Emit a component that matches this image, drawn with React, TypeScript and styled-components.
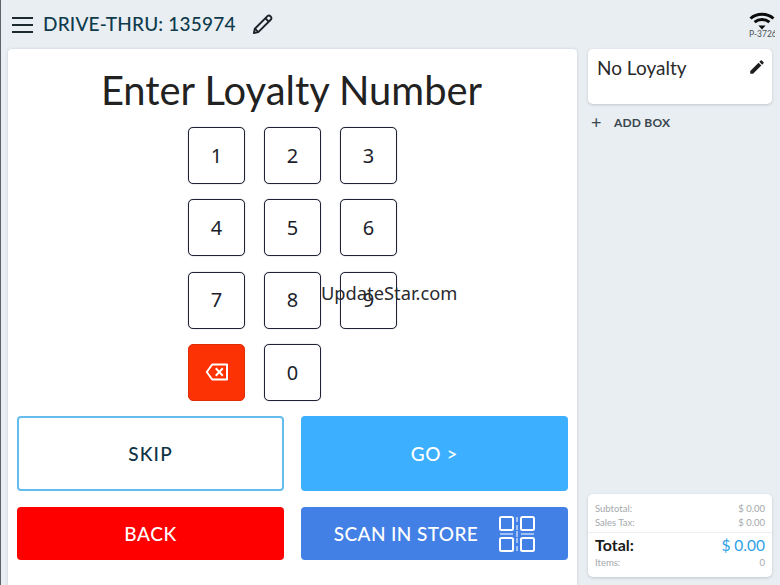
import React from "react";
import styled, { createGlobalStyle } from "styled-components";

const GlobalStyle = createGlobalStyle`
  html, body { margin: 0; padding: 0; }
  body { background: #e9eef2; font-family: Lato, "Liberation Sans", sans-serif; overflow: hidden; }
`;

const KEYS = ["1", "2", "3", "4", "5", "6", "7", "8", "9", "del", "0"];

export default function App() {
  return (
    <>
      <GlobalStyle />
      <Page>
        <Header>
          <MenuButton>
            <span />
            <span />
            <span />
          </MenuButton>
          <HeaderTitle>DRIVE-THRU: 135974</HeaderTitle>
          <HeaderPencil viewBox="0 0 24 24">
            <path d="M17.2 3.2a2.6 2.6 0 0 1 3.6 3.6L7.6 20 3 21l1-4.6z" />
            <path d="M15 5.5l3.5 3.5" />
            <path d="M4.3 16.6l3.1 3.1" />
          </HeaderPencil>
          <DeviceStatus>
            <svg width="26" height="18" viewBox="0 0 26 18">
              <path d="M1.5 6.5C7.8.9 18.2.9 24.5 6.5" />
              <path d="M5.6 10.2c4.2-3.5 10.6-3.5 14.8 0" />
              <polygon points="9.4,13.4 16.6,13.4 13,17.4" />
            </svg>
            <DeviceName>P-3726</DeviceName>
          </DeviceStatus>
        </Header>
        <Body>
          <MainPanel>
            <Title>Enter Loyalty Number</Title>
            <Keypad>
              {KEYS.map((k) =>
                k === "del" ? (
                  <DeleteKey key={k}>
                    <svg width="24" height="18" viewBox="0 0 24 18">
                      <path d="M7.2 1.5H22v15H7.2L1.8 9z" />
                      <path d="M10.8 5.2l7 7.6M17.8 5.2l-7 7.6" />
                    </svg>
                  </DeleteKey>
                ) : (
                  <Key key={k}>{k}</Key>
                )
              )}
            </Keypad>
            <Actions>
              <SkipButton>SKIP</SkipButton>
              <GoButton>GO &gt;</GoButton>
              <BackButton>BACK</BackButton>
              <ScanButton>
                SCAN IN STORE
                <QrIcon viewBox="0 0 36 36">
                  <rect x="1" y="1" width="13" height="13" rx="1.5" />
                  <rect x="22" y="1" width="13" height="13" rx="1.5" />
                  <rect x="1" y="22" width="13" height="13" rx="1.5" />
                  <rect x="22" y="22" width="13" height="13" rx="1.5" />
                  <ThinLines d="M18 1v5M18 9v5M18 22v5M18 30v5M1 18h13M22 18h13M18 15v6" />
                </QrIcon>
              </ScanButton>
            </Actions>
          </MainPanel>
          <Sidebar>
            <LoyaltyCard>
              <LoyaltyName>No Loyalty</LoyaltyName>
              <svg width="18" height="18" viewBox="0 0 24 24" fill="#1f1f1f">
                <path d="M3 17.25V21h3.75L17.81 9.94l-3.75-3.75L3 17.25zM20.71 7.04a1 1 0 0 0 0-1.41l-2.34-2.34a1 1 0 0 0-1.41 0l-1.83 1.83 3.75 3.75 1.83-1.83z" />
              </svg>
            </LoyaltyCard>
            <AddBox>
              <PlusSign>+</PlusSign>
              ADD BOX
            </AddBox>
            <Totals>
              <MinorRow>
                <span>Subtotal:</span>
                <span>$ 0.00</span>
              </MinorRow>
              <MinorRow>
                <span>Sales Tax:</span>
                <span>$ 0.00</span>
              </MinorRow>
              <TotalRow>
                <span>Total:</span>
                <TotalAmount>$ 0.00</TotalAmount>
              </TotalRow>
              <ItemsRow>
                <span>Items:</span>
                <span>0</span>
              </ItemsRow>
            </Totals>
          </Sidebar>
        </Body>
        <Watermark>UpdateStar.com</Watermark>
      </Page>
    </>
  );
}

const Page = styled.div`
  position: relative;
  width: 780px;
  height: 585px;
  display: flex;
  flex-direction: column;
  overflow: hidden;
  border-left: 1px solid #5b6468;
  box-sizing: border-box;
`;

const Header = styled.header`
  height: 49px;
  display: flex;
  align-items: center;
  padding-left: 11px;
  flex-shrink: 0;
`;

const MenuButton = styled.div`
  width: 21px;
  display: flex;
  flex-direction: column;
  gap: 5px;
  margin-right: 10px;
  span {
    display: block;
    height: 2px;
    background: #1c2a30;
  }
`;

const HeaderTitle = styled.div`
  font-size: 19px;
  font-weight: 500;
  color: #0f3b4c;
  letter-spacing: 0.2px;
  margin-bottom: 2px;
`;

const HeaderPencil = styled.svg`
  width: 23px;
  height: 23px;
  margin-left: 15px;
  fill: none;
  stroke: #1c2328;
  stroke-width: 2;
  stroke-linejoin: round;
`;

const DeviceStatus = styled.div`
  margin-left: auto;
  margin-right: 5px;
  width: 26px;
  display: flex;
  flex-direction: column;
  align-items: flex-start;
  overflow: hidden;
  margin-top: 1px;
  svg path {
    fill: none;
    stroke: #0c0c0c;
    stroke-width: 3;
  }
  svg polygon {
    fill: #0c0c0c;
  }
`;

const DeviceName = styled.div`
  font-size: 8.5px;
  line-height: 9px;
  color: #4a5358;
  white-space: nowrap;
`;

const Body = styled.div`
  flex: 1;
  display: flex;
  padding-left: 7px;
  gap: 11px;
  min-height: 0;
`;

const MainPanel = styled.main`
  width: 569px;
  background: #fff;
  border-radius: 4px 4px 0 0;
  box-shadow: 0 0 3px rgba(90, 110, 125, 0.25);
  display: flex;
  flex-direction: column;
  align-items: center;
  box-sizing: border-box;
  padding: 0 9px;
`;

const Title = styled.h1`
  margin: 15px 2px 0 0;
  font-size: 39.9px;
  line-height: 52px;
  font-weight: 400;
  color: #222;
`;

const Keypad = styled.div`
  display: grid;
  grid-template-columns: repeat(3, 57px);
  grid-auto-rows: 57px;
  column-gap: 19px;
  row-gap: 15.4px;
  margin-top: 11px;
`;

const Key = styled.div`
  box-sizing: border-box;
  border: 1.5px solid #1f2236;
  border-radius: 5px;
  box-shadow: 0 0 1px rgba(35, 38, 58, 0.6);
  display: flex;
  align-items: center;
  justify-content: center;
  padding-bottom: 1px;
  font-family: "Noto Sans", sans-serif;
  font-size: 20px;
  color: #1c1e2c;
  background: #fff;
`;

const DeleteKey = styled(Key)`
  background: #fc3205;
  border-color: #e02c05;
  box-shadow: none;
  svg path {
    fill: none;
    stroke: #fff;
    stroke-width: 2;
    stroke-linejoin: round;
  }
`;

const Actions = styled.div`
  align-self: stretch;
  display: grid;
  grid-template-columns: 267px 267px;
  grid-template-rows: 75px 53px;
  column-gap: 17px;
  row-gap: 16px;
  margin-top: 15px;
`;

const ActionButton = styled.div`
  box-sizing: border-box;
  border-radius: 4px;
  display: flex;
  align-items: center;
  justify-content: center;
  font-size: 19px;
  font-weight: 500;
  letter-spacing: 0.6px;
  color: #fff;
`;

const SkipButton = styled(ActionButton)`
  background: #fff;
  border: 2px solid #64bdee;
  color: #0f3346;
  letter-spacing: 1.2px;
`;

const GoButton = styled(ActionButton)`
  background: #3cb0ff;
`;

const BackButton = styled(ActionButton)`
  background: #fe0000;
`;

const ScanButton = styled(ActionButton)`
  background: #4280e6;
  gap: 21px;
  letter-spacing: 0.4px;
`;

const QrIcon = styled.svg`
  width: 36px;
  height: 36px;
  fill: none;
  stroke: #fff;
  stroke-width: 2;
`;

const ThinLines = styled.path`
  stroke-width: 1;
`;

const Sidebar = styled.aside`
  width: 184px;
  display: flex;
  flex-direction: column;
  padding-bottom: 8px;
`;

const LoyaltyCard = styled.section`
  height: 55px;
  background: #fff;
  border-radius: 5px;
  box-shadow: 0 1px 3px rgba(90, 110, 125, 0.3);
  display: flex;
  justify-content: space-between;
  align-items: flex-start;
  padding: 9px 6px 0 9px;
  box-sizing: border-box;
`;

const LoyaltyName = styled.div`
  font-size: 19px;
  line-height: 20px;
  color: #2a2a2a;
`;

const AddBox = styled.div`
  display: flex;
  align-items: center;
  margin-top: 8px;
  height: 20px;
  padding-left: 3px;
  font-size: 12px;
  font-weight: 700;
  letter-spacing: 0.2px;
  color: #3a474f;
`;

const PlusSign = styled.span`
  width: 23px;
  font-size: 18px;
  font-weight: 400;
`;

const Totals = styled.section`
  margin-top: auto;
  height: 83px;
  background: #fff;
  border-radius: 5px;
  box-shadow: 0 1px 3px rgba(90, 110, 125, 0.3);
  padding: 8px 7px 0;
  box-sizing: border-box;
`;

const MinorRow = styled.div`
  display: flex;
  justify-content: space-between;
  font-size: 9.5px;
  line-height: 14px;
  color: #a4a8ab;
`;

const ItemsRow = styled(MinorRow)`
  margin-top: 1px;
`;

const TotalRow = styled.div`
  display: flex;
  justify-content: space-between;
  align-items: center;
  margin: 2px -7px 0;
  padding: 2px 7px 0 7px;
  border-top: 1px solid #e9eef2;
  font-size: 16px;
  line-height: 20px;
  font-weight: 700;
  color: #1a1a1a;
`;

const TotalAmount = styled.span`
  font-weight: 400;
  font-size: 15.5px;
  color: #2f9fe8;
`;

const Watermark = styled.div`
  position: absolute;
  left: 320px;
  top: 280px;
  font-family: "Noto Sans", sans-serif;
  font-size: 18.3px;
  line-height: 25px;
  color: #2a2a30;
`;
